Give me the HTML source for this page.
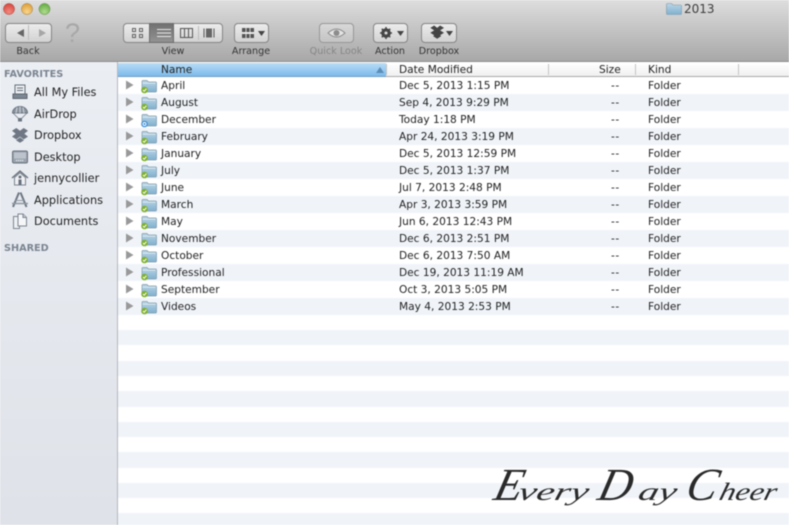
<!DOCTYPE html>
<html><head><meta charset="utf-8"><style>
*{box-sizing:border-box}
html,body{margin:0;padding:0;width:789px;height:525px;overflow:hidden;background:#fff}
body{position:relative;font-family:"DejaVu Sans","Liberation Sans",sans-serif;font-size:10.6px;color:#222}
#w{position:absolute;left:0;top:0;width:789px;height:525px;overflow:hidden;filter:blur(.45px)}
.a{position:absolute;white-space:nowrap}
#tb{left:0;top:0;width:789px;height:62px;background:linear-gradient(#dedede,#d0d0d0 25%,#a8a8a8);border-bottom:1px solid #8e8e8e}
.b{position:absolute;top:23px;height:20px;border:1px solid #858585;border-radius:4px;background:linear-gradient(#ececec,#d2d2d2)}
.l{position:absolute;top:46px;font-size:9.6px;color:#333;text-align:center;width:70px}
#sb{left:0;top:62px;width:118px;height:463px;background:linear-gradient(#ebeef3,#dfe3e9);border-right:1px solid #b4b8be}
.h{position:absolute;left:4px;font-weight:bold;font-size:9.7px;color:#7b8591}
.s{position:absolute;left:34px;font-size:11.3px;color:#222;height:14px;line-height:14px}
.si{position:absolute;left:11px;width:18px;height:18px}
#hd{left:118px;top:63px;width:671px;height:14px;background:linear-gradient(#fff,#f0f0f0);border-bottom:1px solid #a9a9a9;font-size:10.6px;line-height:14px}
#nm{position:absolute;left:0;top:0;width:268px;height:14px;background:linear-gradient(#b9dcf6,#7dbbeb);border-bottom:1px solid #6f9cc2}
.dv{position:absolute;top:1px;width:1px;height:11px;background:#c4c4c4}
.st{position:absolute;left:118px;width:671px;background:#f0f4f9}
.r{position:absolute;left:118px;width:671px;height:17px;line-height:17px;font-size:10.6px;color:#222}
.r span{position:absolute;top:1px;white-space:nowrap}
.r .n{left:43px}.r .d{left:281px}.r .z{left:493px;letter-spacing:.5px}.r .k{left:530px}
.r svg{position:absolute}
.r .t{left:7px;top:3px;width:9px;height:10px}
.r .f{left:22px;top:1px;width:18px;height:16px}
</style></head><body><div id="w">

<svg width="0" height="0" style="position:absolute"><defs>
<linearGradient id="fg" x1="0" y1="0" x2="0" y2="1"><stop offset="0" stop-color="#bcd6e6"/><stop offset="1" stop-color="#7fb0cf"/></linearGradient>
<symbol id="tri" viewBox="0 0 9 10"><path d="M1 .5L8.5 5 1 9.5z" fill="#999"/></symbol>
<symbol id="fo" viewBox="0 0 18 16"><path d="M2 3.500q0-1 1-1h4l1.500 1.500h7q1 0 1 1v8q0 1-1 1H3q-1 0-1-1z" fill="url(#fg)" stroke="#7f9aab" stroke-width=".7"/><path d="M2.500 5.200h13" stroke="#e6f0f6" stroke-width=".8"/></symbol>
<symbol id="ck" viewBox="0 0 18 16"><use href="#fo" width="18" height="16"/><circle cx="4.500" cy="12" r="3.300" fill="#7fb02f"/><path d="M3 12l1.200 1.300 2.200-2.600" fill="none" stroke="#fff" stroke-width="1"/></symbol>
<symbol id="sy" viewBox="0 0 18 16"><use href="#fo" width="18" height="16"/><circle cx="4.500" cy="12" r="3.300" fill="#3f8fd6"/><circle cx="4.500" cy="12" r="1.500" fill="none" stroke="#fff" stroke-width=".9"/></symbol>
</defs></svg>

<div class="a" id="tb"></div>
<svg class="a" style="left:0;top:0" width="60" height="20">
<defs><radialGradient id="rr" cy=".75" r=".7"><stop offset="0" stop-color="#f28a80"/><stop offset="1" stop-color="#d9483e"/></radialGradient>
<radialGradient id="yy" cy=".75" r=".7"><stop offset="0" stop-color="#f7d68e"/><stop offset="1" stop-color="#dfa03a"/></radialGradient>
<radialGradient id="gg" cy=".75" r=".7"><stop offset="0" stop-color="#aedc8c"/><stop offset="1" stop-color="#68ad48"/></radialGradient></defs>
<circle cx="9" cy="9" r="5.600" fill="url(#rr)" stroke="#a05a55" stroke-width=".5"/>
<circle cx="27" cy="9" r="5.600" fill="url(#yy)" stroke="#a08048" stroke-width=".5"/>
<circle cx="44.500" cy="9" r="5.600" fill="url(#gg)" stroke="#6a9050" stroke-width=".5"/></svg>

<svg class="a" style="left:666px;top:2px" width="16" height="14"><path d="M.5 2.500q0-1 1-1h4l1.500 1.500h7.500q1 0 1 1v7.500q0 1-1 1h-13q-1 0-1-1z" fill="url(#fg)" stroke="#7f9aab" stroke-width=".6"/></svg>
<div class="a" style="left:684px;top:2px;font-size:12px;line-height:15px;color:#3d3d3d">2013</div>

<!-- Back -->
<div class="b" style="left:5px;width:47px"></div>
<div class="a" style="left:28px;top:25px;width:1px;height:15px;background:#bcbcbc"></div>
<svg class="a" style="left:5px;top:23px" width="47" height="20"><path d="M19 6v8l-7-4z" fill="#666"/><path d="M35 6v8l7-4z" fill="#a6a6a6" transform="translate(-1 0)"/></svg>
<div class="a" style="left:65px;top:18px;font-size:27px;line-height:30px;color:#a8a8a8;font-family:'Liberation Sans',sans-serif">?</div>
<div class="l" style="left:-7px">Back</div>

<!-- View -->
<div class="b" style="left:123px;width:100px"></div>
<div class="a" style="left:149px;top:23px;width:25px;height:20px;background:linear-gradient(#727272,#929292);border:1px solid #6c6c6c"></div>
<div class="a" style="left:198px;top:26px;width:1px;height:14px;background:#bcbcbc"></div>
<svg class="a" style="left:123px;top:23px" width="100" height="20">
<g fill="none" stroke="#555" stroke-width=".9"><rect x="9.500" y="5.500" width="3" height="3"/><rect x="16.500" y="5.500" width="3" height="3"/><rect x="9.500" y="11.500" width="3" height="3"/><rect x="16.500" y="11.500" width="3" height="3"/></g>
<path d="M34 6.500h14M34 10h14M34 13.500h14" stroke="#e8e8e8" stroke-width="1"/>
<rect x="57.500" y="5.500" width="12" height="9" fill="none" stroke="#555"/><path d="M61.500 5.500v9M65.500 5.500v9" stroke="#555"/>
<path d="M81 5.500v9M91 5.500v9" stroke="#555" stroke-width="1"/><rect x="83" y="5.500" width="6" height="9" fill="#666"/>
</svg>
<div class="l" style="left:138px">View</div>

<!-- Arrange -->
<div class="b" style="left:234px;width:35px"></div>
<svg class="a" style="left:234px;top:23px" width="35" height="20"><path d="M8 5h12v4H8zM8 11h12v4H8z" fill="#555"/><path d="M12 5v10M16 5v10" stroke="#eee" stroke-width=".8"/><path d="M8 10h12" stroke="#eee"/><path d="M24 8h7l-3.500 5z" fill="#444"/></svg>
<div class="l" style="left:216px">Arrange</div>

<!-- Quick Look -->
<div class="b" style="left:319px;width:35px;border-color:#979797;background:linear-gradient(#d8d8d8,#c4c4c4)"></div>
<svg class="a" style="left:319px;top:23px" width="35" height="20"><path d="M9 10q8.500-8 17 0-8.500 8-17 0z" fill="#e4e4e4" stroke="#8c8c8c" stroke-width="1"/><circle cx="17.500" cy="10" r="3" fill="#8c8c8c"/></svg>
<div class="l" style="left:301px;color:#858585">Quick Look</div>

<!-- Action -->
<div class="b" style="left:373px;width:35px"></div>
<svg class="a" style="left:373px;top:23px" width="35" height="20"><circle cx="13" cy="10" r="3.600" fill="none" stroke="#444" stroke-width="2.400"/><path d="M13 4v12M7 10h12M8.800 5.800l8.400 8.400M17.200 5.800l-8.400 8.400" stroke="#444" stroke-width="1.500"/><circle cx="13" cy="10" r="1.500" fill="#ddd"/><path d="M24 8h7l-3.500 5z" fill="#444"/></svg>
<div class="l" style="left:355px">Action</div>

<!-- Dropbox -->
<div class="b" style="left:421px;width:36px"></div>
<svg class="a" style="left:421px;top:23px" width="36" height="20"><path d="M10 4.500l4 2.500-4 2.500 4 2.500-1 .8v.2l4 2.500 4-2.500v-.2l-1-.8 4-2.500-4-2.500 4-2.500-4-2.500-3 2.500-3-2.500z" fill="#444" transform="translate(-.5 .5) scale(.98)"/><path d="M25 8h7l-3.500 5z" fill="#444"/></svg>
<div class="l" style="left:404px">Dropbox</div>

<!-- Sidebar -->
<div class="a" id="sb"></div>
<div class="h" style="top:69px">FAVORITES</div>
<div class="h" style="top:243px">SHARED</div>

<svg class="si" style="top:83px" viewBox="0 0 18 18"><rect x="4" y="2" width="10" height="9" fill="#eceff3" stroke="#646d78"/><path d="M6 5h6M6 7.500h6" stroke="#646d78"/><path d="M2 11h14v4.500H2z" fill="#7d8793" stroke="#5c6570"/></svg>
<div class="s" style="top:86px">All My Files</div>

<svg class="si" style="top:105px" viewBox="0 0 18 18"><path d="M1.500 8a7.500 6.500 0 0 1 15 0z" fill="#8a939e" stroke="#6b7480"/><path d="M6 2.500L5 8M12 2.500L13 8M9 1.500V8" stroke="#dfe3e8" stroke-width=".8"/><path d="M2 8l6 6M16 8l-6 6" stroke="#727b87" stroke-width=".8"/><rect x="7" y="13" width="4" height="3.500" fill="#6b7480"/></svg>
<div class="s" style="top:108px">AirDrop</div>

<svg class="si" style="top:126px" viewBox="0 0 18 18"><path d="M5.300 2L1 4.800l3.700 3L1 10.600l4.300 2.800L9 10.600l3.700 2.800 4.300-2.800-3.700-2.800L17 4.800 12.700 2 9 4.800z" fill="#6e7783"/><path d="M5 14.200l4 2.600 4-2.600-4-2.800z" fill="#6e7783"/></svg>
<div class="s" style="top:129px">Dropbox</div>

<svg class="si" style="top:148px" viewBox="0 0 18 18"><rect x="1.500" y="3" width="15" height="12" rx="1.500" fill="#9aa3ae" stroke="#68717c"/><rect x="3" y="4.500" width="12" height="6" fill="#bcc3cc"/><path d="M5 12.500h8" stroke="#eef0f3" stroke-width="1.200" stroke-dasharray="1.200 .8"/></svg>
<div class="s" style="top:151px">Desktop</div>

<svg class="si" style="top:169px" viewBox="0 0 18 18"><path d="M1 9l8-7 8 7" fill="none" stroke="#68717c" stroke-width="1.300"/><path d="M3.500 8.500V16h11V8.500L9 3.700z" fill="#eef0f3" stroke="#7c8590"/><circle cx="9" cy="8" r="1.500" fill="#68717c"/><rect x="7.500" y="10.500" width="3" height="5.500" fill="#68717c"/></svg>
<div class="s" style="top:172px">jennycollier</div>

<svg class="si" style="top:191px" viewBox="0 0 18 18"><path d="M9.500 1.500L15.500 16M8 1.500L2 16" stroke="#6e7783" stroke-width="2"/><path d="M1 12.500h16" stroke="#8f98a3" stroke-width="1.500"/><path d="M4 9.500h9" stroke="#8f98a3"/></svg>
<div class="s" style="top:194px">Applications</div>

<svg class="si" style="top:212px" viewBox="0 0 18 18"><path d="M2.500 4.500h6v12h-6z" fill="#eef0f3" stroke="#7c8590"/><path d="M7 2h5l3.500 3.500V14H7z" fill="#f5f6f8" stroke="#7c8590"/><path d="M12 2v3.500h3.500" fill="#c8ced6" stroke="#7c8590"/></svg>
<div class="s" style="top:215px">Documents</div>

<!-- Header -->
<div class="a" id="hd">
<div id="nm"></div>
<span class="a" style="left:43px;top:0">Name</span>
<svg class="a" style="left:258px;top:4px" width="8" height="6"><path d="M4 0l4 6H0z" fill="#5c8cb8"/></svg>
<div class="dv" style="left:268px"></div>
<span class="a" style="left:281px;top:0">Date Modified</span>
<div class="dv" style="left:430px"></div>
<span class="a" style="left:481px;top:0">Size</span>
<div class="dv" style="left:517px"></div>
<span class="a" style="left:530px;top:0">Kind</span>
<div class="dv" style="left:620px"></div>
</div>

<!-- Stripes -->
<div class="st" style="top:94px;height:17px"></div>
<div class="st" style="top:128px;height:17px"></div>
<div class="st" style="top:162px;height:17px"></div>
<div class="st" style="top:196px;height:17px"></div>
<div class="st" style="top:230px;height:17px"></div>
<div class="st" style="top:264px;height:17px"></div>
<div class="st" style="top:298px;height:17px"></div>
<div class="st" style="top:329.500px;height:15.500px"></div>
<div class="st" style="top:360.500px;height:15.500px"></div>
<div class="st" style="top:391px;height:15.500px"></div>
<div class="st" style="top:421.500px;height:15.500px"></div>
<div class="st" style="top:452px;height:15.500px"></div>
<div class="st" style="top:482.500px;height:15.500px"></div>
<div class="st" style="top:513px;height:12px"></div>

<!-- Rows -->
<div class="r" style="top:77px"><svg class="t"><use href="#tri" width="9" height="10"/></svg><svg class="f"><use href="#ck" width="18" height="16"/></svg><span class="n">April</span><span class="d">Dec 5, 2013 1:15 PM</span><span class="z">--</span><span class="k">Folder</span></div>
<div class="r" style="top:94px"><svg class="t"><use href="#tri" width="9" height="10"/></svg><svg class="f"><use href="#ck" width="18" height="16"/></svg><span class="n">August</span><span class="d">Sep 4, 2013 9:29 PM</span><span class="z">--</span><span class="k">Folder</span></div>
<div class="r" style="top:111px"><svg class="t"><use href="#tri" width="9" height="10"/></svg><svg class="f"><use href="#sy" width="18" height="16"/></svg><span class="n">December</span><span class="d">Today 1:18 PM</span><span class="z">--</span><span class="k">Folder</span></div>
<div class="r" style="top:128px"><svg class="t"><use href="#tri" width="9" height="10"/></svg><svg class="f"><use href="#ck" width="18" height="16"/></svg><span class="n">February</span><span class="d">Apr 24, 2013 3:19 PM</span><span class="z">--</span><span class="k">Folder</span></div>
<div class="r" style="top:145px"><svg class="t"><use href="#tri" width="9" height="10"/></svg><svg class="f"><use href="#ck" width="18" height="16"/></svg><span class="n">January</span><span class="d">Dec 5, 2013 12:59 PM</span><span class="z">--</span><span class="k">Folder</span></div>
<div class="r" style="top:162px"><svg class="t"><use href="#tri" width="9" height="10"/></svg><svg class="f"><use href="#ck" width="18" height="16"/></svg><span class="n">July</span><span class="d">Dec 5, 2013 1:37 PM</span><span class="z">--</span><span class="k">Folder</span></div>
<div class="r" style="top:179px"><svg class="t"><use href="#tri" width="9" height="10"/></svg><svg class="f"><use href="#ck" width="18" height="16"/></svg><span class="n">June</span><span class="d">Jul 7, 2013 2:48 PM</span><span class="z">--</span><span class="k">Folder</span></div>
<div class="r" style="top:196px"><svg class="t"><use href="#tri" width="9" height="10"/></svg><svg class="f"><use href="#ck" width="18" height="16"/></svg><span class="n">March</span><span class="d">Apr 3, 2013 3:59 PM</span><span class="z">--</span><span class="k">Folder</span></div>
<div class="r" style="top:213px"><svg class="t"><use href="#tri" width="9" height="10"/></svg><svg class="f"><use href="#ck" width="18" height="16"/></svg><span class="n">May</span><span class="d">Jun 6, 2013 12:43 PM</span><span class="z">--</span><span class="k">Folder</span></div>
<div class="r" style="top:230px"><svg class="t"><use href="#tri" width="9" height="10"/></svg><svg class="f"><use href="#ck" width="18" height="16"/></svg><span class="n">November</span><span class="d">Dec 6, 2013 2:51 PM</span><span class="z">--</span><span class="k">Folder</span></div>
<div class="r" style="top:247px"><svg class="t"><use href="#tri" width="9" height="10"/></svg><svg class="f"><use href="#ck" width="18" height="16"/></svg><span class="n">October</span><span class="d">Dec 6, 2013 7:50 AM</span><span class="z">--</span><span class="k">Folder</span></div>
<div class="r" style="top:264px"><svg class="t"><use href="#tri" width="9" height="10"/></svg><svg class="f"><use href="#ck" width="18" height="16"/></svg><span class="n">Professional</span><span class="d">Dec 19, 2013 11:19 AM</span><span class="z">--</span><span class="k">Folder</span></div>
<div class="r" style="top:281px"><svg class="t"><use href="#tri" width="9" height="10"/></svg><svg class="f"><use href="#ck" width="18" height="16"/></svg><span class="n">September</span><span class="d">Oct 3, 2013 5:05 PM</span><span class="z">--</span><span class="k">Folder</span></div>
<div class="r" style="top:298px"><svg class="t"><use href="#tri" width="9" height="10"/></svg><svg class="f"><use href="#ck" width="18" height="16"/></svg><span class="n">Videos</span><span class="d">May 4, 2013 2:53 PM</span><span class="z">--</span><span class="k">Folder</span></div>

<svg class="a" style="left:0;top:0" width="789" height="525" font-family="Liberation Serif,serif" font-style="italic" fill="#2a2a2a">
<text transform="translate(492 500) skewX(-14)" font-size="46">E</text>
<text transform="translate(517 500) skewX(-14)" font-size="25" textLength="70" lengthAdjust="spacingAndGlyphs">very</text>
<text transform="translate(596 500) skewX(-14)" font-size="46">D</text>
<text transform="translate(637 500) skewX(-14)" font-size="25" textLength="38" lengthAdjust="spacingAndGlyphs">ay</text>
<text transform="translate(684 500) skewX(-14)" font-size="46">C</text>
<text transform="translate(718 500) skewX(-14)" font-size="25" textLength="57" lengthAdjust="spacingAndGlyphs">heer</text>
</svg>
</div></body></html>
